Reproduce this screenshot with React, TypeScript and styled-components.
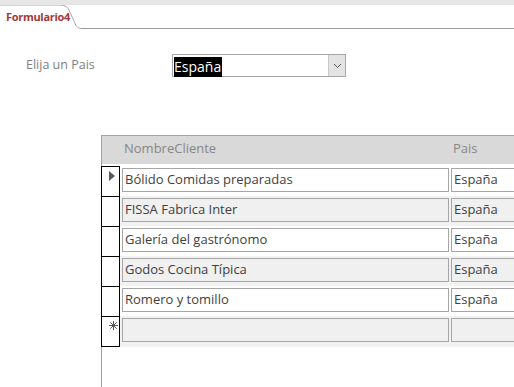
import styled, { createGlobalStyle } from "styled-components"

type Cliente = { nombre: string; pais: string }

const clientes: Cliente[] = [
    { nombre: "Bólido Comidas preparadas", pais: "España" },
    { nombre: "FISSA Fabrica Inter", pais: "España" },
    { nombre: "Galería del gastrónomo", pais: "España" },
    { nombre: "Godos Cocina Típica", pais: "España" },
    { nombre: "Romero y tomillo", pais: "España" },
]

export default function App() {
    return (
        <Page>
            <GlobalStyle />
            <TopStrip />
            <TabRow>
                <Tab>Formulario4</Tab>
                <TabCorner width="20" height="24" viewBox="0 0 20 24">
                    <path d="M0 0.5 H1.5 Q4.5 0.5 6.5 4 L14 20.5 Q15.8 23.5 19 23.5 H20" fill="#fff" stroke="#a6a6a6" />
                </TabCorner>
                <TabFiller />
            </TabRow>
            <Body>
                <FilterRow>
                    <Label>Elija un Pais</Label>
                    <Combo>
                        <ComboValue><Selected>España</Selected></ComboValue>
                        <ComboButton>
                            <svg width="9" height="6" viewBox="0 0 9 6">
                                <path d="M1 1 L4.5 4.5 L8 1" fill="none" stroke="#555" strokeWidth="1" />
                            </svg>
                        </ComboButton>
                    </Combo>
                </FilterRow>
                <Datasheet>
                    <HeaderRow>
                        <span />
                        <HeaderCell>NombreCliente</HeaderCell>
                        <HeaderCell>Pais</HeaderCell>
                    </HeaderRow>
                    <Rows>
                        {clientes.map((c, i) => (
                            <Row key={c.nombre} $alt={i % 2 === 1}>
                                <Selector>
                                    {i === 0 && (
                                        <svg width="6" height="10" viewBox="0 0 6 10">
                                            <path d="M0 0 L6 5 L0 10 Z" fill="#595959" />
                                        </svg>
                                    )}
                                </Selector>
                                <Field $alt={i % 2 === 1}>{c.nombre}</Field>
                                <Field $alt={i % 2 === 1}>{c.pais}</Field>
                            </Row>
                        ))}
                        <Row $alt $last>
                            <Selector $last>
                                <svg width="9" height="9" viewBox="0 0 9 9">
                                    <path d="M4.5 0 V9 M0 4.5 H9 M1.3 1.3 L7.7 7.7 M7.7 1.3 L1.3 7.7" stroke="#555" strokeWidth="1" />
                                </svg>
                            </Selector>
                            <Field $alt />
                            <Field $alt />
                        </Row>
                    </Rows>
                </Datasheet>
            </Body>
        </Page>
    )
}

const GlobalStyle = createGlobalStyle`
    html, body {
        margin: 0;
        padding: 0;
        background: #fff;
        font-family: "Open Sans", "Noto Sans", sans-serif;
    }
`

const Page = styled.div`
    width: 514px;
    height: 387px;
    overflow: hidden;
    display: flex;
    flex-direction: column;
`

const TopStrip = styled.div`
    height: 5px;
    background: #e6e6e6;
`

const TabRow = styled.div`
    display: flex;
    height: 24px;
`

const Tab = styled.div`
    width: 56px;
    padding-left: 6px;
    border-top: 1px solid #d4d4d4;
    font-size: 11px;
    font-weight: 700;
    line-height: 22px;
    color: #a4373a;
    white-space: nowrap;
    letter-spacing: -0.3px;
`

const TabCorner = styled.svg`
    flex: none;
    display: block;
`

const TabFiller = styled.div`
    flex: 1;
    border-bottom: 1px solid #9c9c9c;
`

const Body = styled.div`
    flex: 1;
    display: flex;
    flex-direction: column;
    padding: 25px 0 0 26px;
    min-height: 0;
`

const FilterRow = styled.div`
    display: flex;
    align-items: center;
    height: 23px;
`

const Label = styled.div`
    width: 146px;
    font-size: 12.5px;
    color: #7f7f7f;
    padding-bottom: 3px;
`

const Combo = styled.div`
    width: 174px;
    height: 23px;
    box-sizing: border-box;
    border: 1px solid #a6a6a6;
    display: flex;
    background: #fff;
`

const ComboValue = styled.div`
    flex: 1;
    padding: 0 0 0 1px;
`

const Selected = styled.span`
    display: inline-block;
    background: #000;
    color: #fff;
    font-size: 14px;
    line-height: 20px;
    padding: 0 1px 0 0;
`

const ComboButton = styled.div`
    width: 16px;
    background: #e3e3e3;
    border-left: 1px solid #c8c8c8;
    display: flex;
    align-items: center;
    justify-content: center;
`

const Datasheet = styled.div`
    flex: 1;
    margin: 58px 0 0 75px;
    border-left: 1px solid #a0a0a0;
    display: flex;
    flex-direction: column;
`

const HeaderRow = styled.div`
    display: grid;
    grid-template-columns: 18px 327px 80px;
    column-gap: 2px;
    height: 28px;
    background: #d9d9d9;
    border-top: 1px solid #a6a6a6;
`

const HeaderCell = styled.div`
    padding-left: 2px;
    font-size: 13px;
    line-height: 25px;
    color: #878787;
`

const Rows = styled.div`
    margin-top: 2px;
    display: flex;
    flex-direction: column;
`

const Row = styled.div<{ $alt?: boolean; $last?: boolean }>`
    display: grid;
    grid-template-columns: 18px 327px 80px;
    column-gap: 2px;
    height: ${p => (p.$last ? 31 : 30)}px;
    background: ${p => (p.$alt ? "#f2f2f2" : "#fff")};
`

const Selector = styled.div<{ $last?: boolean }>`
    box-sizing: border-box;
    border-top: 1px solid #000;
    border-right: 1px solid #000;
    border-bottom: ${p => (p.$last ? "1px solid #000" : "none")};
    box-shadow: -1px 0 0 #000;
    background: #fff;
    padding: 4px 0 0 7px;
    display: flex;
    align-items: flex-start;
    svg {
        display: block;
    }
`

const Field = styled.div<{ $alt?: boolean }>`
    box-sizing: border-box;
    margin-top: 2px;
    height: 24px;
    border: 1px solid #a6a6a6;
    background: ${p => (p.$alt ? "#f0f0f0" : "#fff")};
    padding-left: 2px;
    font-size: 13px;
    line-height: 20px;
    color: #3f3f3f;
    white-space: nowrap;
    overflow: hidden;
`
